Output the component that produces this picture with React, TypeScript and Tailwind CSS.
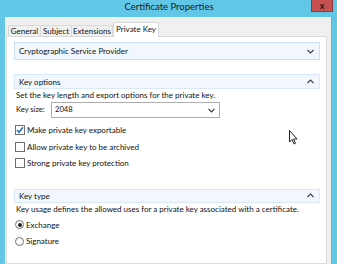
import React from "react";

const font = { fontFamily: 'Lato, "Noto Sans", sans-serif' };

function ChevronDown() {
  return (
    <svg width="7" height="5" viewBox="0 0 7 5" className="block">
      <path d="M0.5 1 L3.5 4 L6.5 1" fill="none" stroke="#404040" strokeWidth="1.1" />
    </svg>
  );
}
function ChevronUp() {
  return (
    <svg width="7" height="5" viewBox="0 0 7 5" className="block">
      <path d="M0.5 4 L3.5 1 L6.5 4" fill="none" stroke="#404040" strokeWidth="1.1" />
    </svg>
  );
}

function Checkbox({ checked, label }: { checked?: boolean; label: string }) {
  return (
    <div className="flex items-center h-[16.5px]">
      <div className="w-[10px] h-[10px] border border-[#707070] bg-white flex items-center justify-center">
        {checked && (
          <svg width="8" height="8" viewBox="0 0 8 8">
            <path d="M1 4 L3 6.3 L7 1.2" fill="none" stroke="#1a6fc6" strokeWidth="1.5" />
          </svg>
        )}
      </div>
      <span className="ml-[2px] text-[8px] text-[#111] whitespace-nowrap">{label}</span>
    </div>
  );
}

function Radio({ checked, label }: { checked?: boolean; label: string }) {
  return (
    <div className="flex items-center h-[16.5px]">
      <div className="ml-[1px] w-[9px] h-[9px] rounded-full border border-[#707070] bg-white flex items-center justify-center">
        {checked && <div className="w-[4px] h-[4px] rounded-full bg-[#222]" />}
      </div>
      <span className="ml-[2px] text-[8px] text-[#111] whitespace-nowrap">{label}</span>
    </div>
  );
}

export default function App() {
  return (
    <div className="w-[337px] h-[264px] bg-[#62c7e7] overflow-hidden relative" style={font}>
      {/* title bar */}
      <div className="h-[17px] flex items-center justify-center text-[9.5px] text-[#1a1a1a] pb-[2px] pl-[1px]">
        Certificate Properties
      </div>
      <div className="absolute top-0 left-[311px] w-[22px] h-[12px] bg-[#c75050] border border-[#8c3a3a] border-t-0 flex items-center justify-center">
        <span className="text-[9px] font-bold leading-none text-[#1a1a1a]">x</span>
      </div>
      {/* window body */}
      <div className="ml-[5px] w-[327px] h-[247px] bg-[#f0f0f0] border-r border-[#a0a0a0] pl-[1px] pt-[5px] flex flex-col">
        {/* tabs */}
        <div className="flex items-end h-[14px] pl-[2px] text-[8px] text-[#111]">
          <div className="w-[33px] h-[11px] border border-b-0 border-[#d9d9d9] flex items-center justify-center bg-[#f0f0f0]">General</div>
          <div className="w-[31px] h-[11px] border border-b-0 border-l-0 border-[#d9d9d9] flex items-center justify-center bg-[#f0f0f0]">Subject</div>
          <div className="w-[41px] h-[11px] border border-b-0 border-l-0 border-[#d9d9d9] flex items-center justify-center bg-[#f0f0f0]">Extensions</div>
          <div className="w-[46px] h-[15px] border border-b-0 border-[#d9d9d9] flex items-center justify-center bg-white -mb-[1px] relative z-10 pb-[2px]">Private Key</div>
        </div>
        {/* panel */}
        <div className="flex-1 w-[321px] bg-white border border-[#d9d9d9] pl-[7px] pr-[6px] pt-[5px]">
          <div className="h-[18px] bg-[#f2f7fd] border border-[#c9ddf3] flex items-center justify-between pl-[4px] pr-[5px]">
            <span className="text-[8px] text-[#111]">Cryptographic Service Provider</span>
            <ChevronDown />
          </div>
          <div className="mt-[14px] h-[15px] bg-[#f2f7fd] border border-[#dbe8f7] flex items-center justify-between pl-[4px] pr-[5px]">
            <span className="text-[8px] text-[#111]">Key options</span>
            <ChevronUp />
          </div>
          <div className="h-[12px] pl-[2px] flex items-center text-[8px] text-[#111] whitespace-nowrap">
            Set the key length and export options for the private key.
          </div>
          <div className="mt-[1px] h-[16px] pl-[2px] flex items-center">
            <span className="w-[35px] text-[7.6px] text-[#111] whitespace-nowrap">Key size:</span>
            <div className="w-[169px] h-[16px] border border-[#acacac] bg-white flex items-center justify-between pl-[3px] pr-[4px]">
              <span className="text-[7.6px] text-[#111]">2048</span>
              <ChevronDown />
            </div>
          </div>
          <div className="mt-[4px] pl-[1px]">
            <Checkbox checked label="Make private key exportable" />
            <Checkbox label="Allow private key to be archived" />
            <Checkbox label="Strong private key protection" />
          </div>
          <div className="mt-[17px] h-[14px] bg-[#f2f7fd] border border-[#dbe8f7] flex items-center justify-between pl-[4px] pr-[5px]">
            <span className="text-[8px] text-[#111]">Key type</span>
            <ChevronUp />
          </div>
          <div className="h-[13px] pl-[2px] flex items-center text-[8px] text-[#111] whitespace-nowrap">
            Key usage defines the allowed uses for a private key associated with a certificate.
          </div>
          <div className="mt-[1px]">
            <Radio checked label="Exchange" />
            <Radio label="Signature" />
          </div>
        </div>
      </div>
      {/* mouse cursor */}
      <svg className="absolute left-[289px] top-[130px]" width="10" height="16" viewBox="0 0 10 16">
        <path d="M0.5 0.5 L0.5 12 L3 9.5 L5 14 L6.5 13.3 L4.6 9 L8 9 Z" fill="white" stroke="#222" strokeWidth="1" />
      </svg>
    </div>
  );
}
